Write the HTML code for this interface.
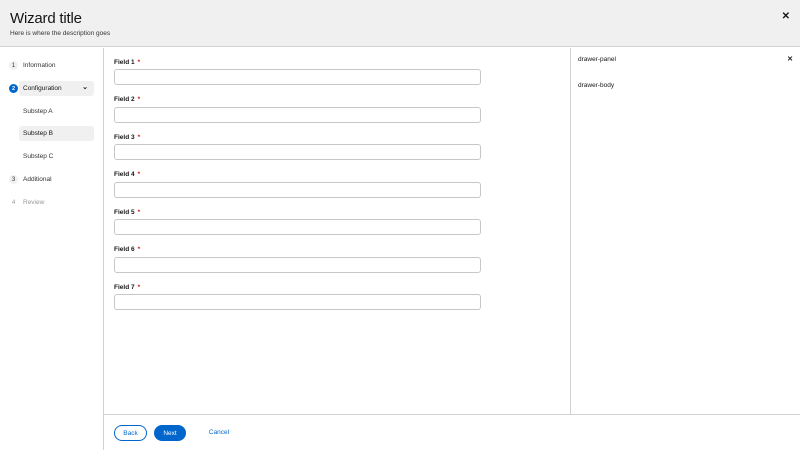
<!DOCTYPE html><html><head><style>
*{box-sizing:border-box;margin:0;padding:0}
body{width:800px;height:450px;font-family:"Liberation Sans",sans-serif;color:#151515;background:#fff;position:relative;overflow:hidden;font-size:7px}
.hdr{position:absolute;left:0;top:0;width:800px;height:47px;background:#f0f0f0;border-bottom:1px solid #d2d2d2}
.hdr h1{position:absolute;left:10px;top:10px;font-size:15px;font-weight:normal;letter-spacing:-0.2px}
.hdr p{position:absolute;left:10px;top:30px;font-size:6.5px;color:#333}
.x{position:absolute;font-weight:bold}
.nav{position:absolute;left:0;top:48px;width:104px;height:402px;border-right:1px solid #d2d2d2}
.ni{position:absolute;left:19px;width:75px;height:15px;line-height:16px;padding-left:4px;font-size:6.5px;color:#333;border-radius:3px}
.num{position:absolute;left:9px;width:9px;height:9px;line-height:10px;text-align:center;font-size:6px;border-radius:50%}
.main{position:absolute;left:104px;top:48px;width:466px;height:366px}
.lab{position:absolute;left:10px;font-size:6.5px;font-weight:bold}
.lab span{color:#c9190b;margin-left:3px}
.inp{position:absolute;left:10px;width:367px;height:16px;border:1px solid #c7c7c7;border-radius:3px}
.drw{position:absolute;left:570px;top:48px;width:230px;height:366px;border-left:1px solid #d2d2d2;font-size:6.5px}
.ftr{position:absolute;left:104px;top:414px;width:696px;height:36px;border-top:1px solid #d2d2d2}
.btn{position:absolute;top:10px;height:16px;line-height:15px;border-radius:8px;text-align:center;font-size:6.5px}
</style></head><body>
<div class="hdr"><h1>Wizard title</h1><p>Here is where the description goes</p><div class="x" style="right:10px;top:11px;font-size:10px">✕</div></div>
<div class="nav">
<div class="num" style="top:13px;background:#f0f0f0;color:#333">1</div><div class="ni" style="top:10px">Information</div>
<div class="num" style="top:36px;background:#0066cc;color:#fff;font-size:5.5px;font-weight:bold">2</div><div class="ni" style="top:33px;background:#f0f0f0;color:#151515">Configuration<span style="position:absolute;right:6px;top:-1px;font-size:7px;font-weight:bold">⌄</span></div>
<div class="ni" style="top:56px">Substep A</div>
<div class="ni" style="top:78px;background:#f0f0f0;color:#151515">Substep B</div>
<div class="ni" style="top:101px">Substep C</div>
<div class="num" style="top:127px;background:#f0f0f0;color:#333">3</div><div class="ni" style="top:124px">Additional</div>
<div class="num" style="top:150px;color:#999">4</div><div class="ni" style="top:147px;color:#999">Review</div>
</div>
<div class="main">
<div class="lab" style="top:11px">Field 1<span>*</span></div><div class="inp" style="top:21px"></div>
<div class="lab" style="top:48px">Field 2<span>*</span></div><div class="inp" style="top:59px"></div>
<div class="lab" style="top:86px">Field 3<span>*</span></div><div class="inp" style="top:96px"></div>
<div class="lab" style="top:123px">Field 4<span>*</span></div><div class="inp" style="top:134px"></div>
<div class="lab" style="top:161px">Field 5<span>*</span></div><div class="inp" style="top:171px"></div>
<div class="lab" style="top:198px">Field 6<span>*</span></div><div class="inp" style="top:209px"></div>
<div class="lab" style="top:236px">Field 7<span>*</span></div><div class="inp" style="top:246px"></div>
</div>
<div class="drw"><div style="position:absolute;left:7px;top:8px">drawer-panel</div><div class="x" style="right:7px;top:7px;font-size:7px">✕</div><div style="position:absolute;left:7px;top:34px">drawer-body</div></div>
<div class="ftr">
<div class="btn" style="left:10px;width:33px;border:1px solid #0066cc;color:#0066cc">Back</div>
<div class="btn" style="left:50px;width:32px;background:#0066cc;color:#fff;border:1px solid #0066cc">Next</div>
<div class="btn" style="left:100px;width:30px;color:#0066cc">Cancel</div>
</div>
</body></html>
